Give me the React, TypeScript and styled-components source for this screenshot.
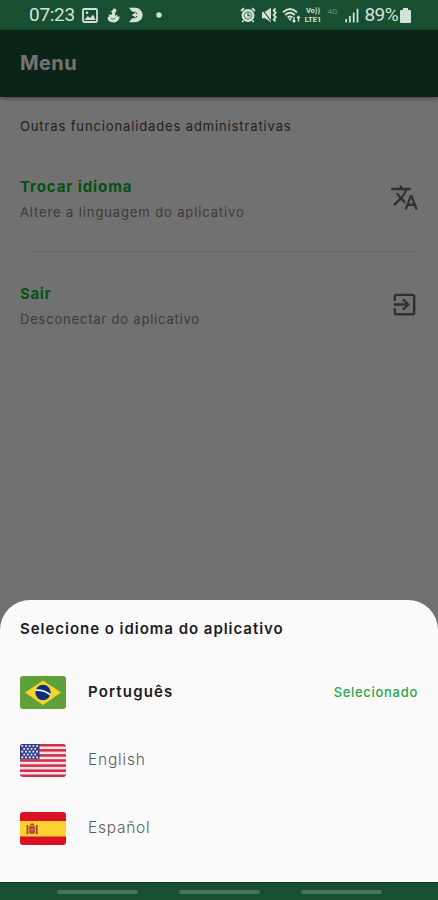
import React from 'react';
import styled, { createGlobalStyle } from 'styled-components';
import { MdTranslate, MdExitToApp } from 'react-icons/md';

const GlobalStyle = createGlobalStyle`
  * { box-sizing: border-box; }
  body { margin: 0; background: #174f30; }
`;

const Screen = styled.div`
  display: flex;
  flex-direction: column;
  width: 438px;
  height: 900px;
  overflow: hidden;
  font-family: Inter, 'Open Sans', sans-serif;
`;

const StatusBar = styled.div`
  display: flex;
  justify-content: space-between;
  align-items: center;
  flex: none;
  height: 30px;
  padding: 0 27px 0 29px;
  background: #174f30;
  color: #d3e2d8;
  font-family: Roboto, sans-serif;
  svg { display: block; flex: none; }
`;

const StatusGroup = styled.div`
  display: flex;
  align-items: center;
`;

const StatusText = styled.span<{ $spacing?: number }>`
  font-size: 19px;
  line-height: 30px;
  letter-spacing: ${(p) => p.$spacing ?? 0}px;
`;

const StatusIcon = styled.span<{ $gap: number }>`
  margin-left: ${(p) => p.$gap}px;
`;

const Lte = styled.span`
  display: flex;
  flex-direction: column;
  align-items: center;
  width: 19px;
  margin-left: 3px;
  font-size: 7.5px;
  font-weight: 700;
  line-height: 9px;
  letter-spacing: 0;
`;

const NetworkLabel = styled.span`
  align-self: flex-start;
  width: 12px;
  margin: 7px 0 0 5px;
  font-size: 8px;
  line-height: 9px;
  color: #6d9480;
`;

const Body = styled.div`
  position: relative;
  flex: 1;
  background: #fafafa;
`;

const Header = styled.header`
  display: flex;
  align-items: center;
  height: 67px;
  padding: 0 20px 1px;
  background: #1a5035;
  box-shadow: 0 1px 4px rgba(0, 0, 0, 0.45);
`;

const Label = styled.span<{
  $size: number;
  $color: string;
  $weight?: number;
  $spacing?: number;
}>`
  font-size: ${(p) => p.$size}px;
  font-weight: ${(p) => p.$weight ?? 400};
  color: ${(p) => p.$color};
  letter-spacing: ${(p) => p.$spacing ?? 0}px;
  line-height: 24px;
  white-space: nowrap;
`;

const Intro = styled.div`
  display: flex;
  padding: 17px 20px 0;
`;

const MenuItem = styled.div`
  display: flex;
  justify-content: space-between;
  align-items: center;
  height: 107px;
  padding: 0 19px 0 20px;
  color: #6b6b6b;
  svg { margin-bottom: 2px; }
`;

const MenuList = styled.div`
  padding-top: 7px;
`;

const ItemText = styled.div`
  display: flex;
  flex-direction: column;
  gap: 1px;
  padding-top: 1px;
`;

const Divider = styled.div`
  height: 1px;
  margin: -1px 18px 0 28px;
  background: #e2e2e2;
`;

const Scrim = styled.div`
  position: absolute;
  inset: 0;
  background: rgba(0, 0, 0, 0.55);
`;

const Sheet = styled.section`
  position: absolute;
  left: 0;
  right: 0;
  bottom: 0;
  height: 282px;
  padding: 17px 20px 0;
  border-radius: 30px 30px 0 0;
  background: #fafafa;
`;

const SheetTitle = styled.div`
  display: flex;
  height: 41px;
`;

const LanguageRow = styled.div`
  display: flex;
  align-items: center;
  height: 68px;
`;

const FlagBox = styled.div`
  width: 46px;
  height: 33px;
  margin-right: 22px;
  border-radius: 3px;
  overflow: hidden;
  svg { display: block; }
`;

const Selected = styled.div`
  display: flex;
  margin-left: auto;
`;

const NavBar = styled.nav`
  display: flex;
  justify-content: center;
  align-items: center;
  gap: 41px;
  flex: none;
  height: 18px;
  border-top: 1px solid #0b3a1d;
  background: #174f30;
`;

const NavHandle = styled.span`
  width: 81px;
  height: 4px;
  border-radius: 2px;
  background: #457359;
`;

const PictureIcon = () => (
  <svg width="16" height="15" viewBox="0 0 16 15">
    <rect x="1" y="1" width="14" height="13" rx="1.2" fill="none" stroke="currentColor" strokeWidth="1.8" />
    <path d="M2.5 12l3.3-4 2.4 2 2.8-3.6 2.7 5.6z" fill="currentColor" />
    <circle cx="5" cy="4.8" r="1.3" fill="currentColor" />
  </svg>
);

const DuckIcon = () => (
  <svg width="13" height="15" viewBox="0 0 13 15">
    <path
      d="M7.2.5c1.8 0 2.6 1.5 2.1 2.8L8 5.3l.3 2.4 2.3-1.1-.6 2 2.6-.2c-.1 3.5-2.5 6-6 6-3.2 0-6-1.6-6-4.1 0-1.2.8-2 1.900-2.100l-1-1.900 3.200.5.5-2.100L3.700 3.500l1.700-.8C5.600 1.300 6.200.5 7.200.5z"
      fill="currentColor"
    />
    <path d="M3.500 10.200c1.300 1.400 3.800 1.200 4.900-.5" fill="none" stroke="#174f30" strokeWidth="0.7" />
  </svg>
);

const CrescentIcon = () => (
  <svg width="16" height="16" viewBox="0 0 16 16">
    <path d="M1 .8h6.500a7.200 7.200 0 0 1 0 14.400H1l3.200-4h3a3.400 3.400 0 0 0 0-6.400h-3z" fill="currentColor" />
    <path d="M4.500 8h5M7 5.800v4.400" stroke="currentColor" strokeWidth="1.800" />
  </svg>
);

const AlarmIcon = () => (
  <svg width="16" height="16" viewBox="0 0 16 16">
    <circle cx="8" cy="8.500" r="6.500" fill="currentColor" />
    <path d="M1 4l3-2.800M15 4l-3-2.800M3.500 13.500L2.300 15M12.500 13.500l1.200 1.500" stroke="currentColor" strokeWidth="1.900" />
    <circle cx="8" cy="8.500" r="3.700" fill="none" stroke="#174f30" strokeWidth=".7" />
    <path d="M8 6v2.800h2.200" fill="none" stroke="#174f30" strokeWidth="1.100" />
  </svg>
);

const MuteIcon = () => (
  <svg width="16" height="16" viewBox="0 0 16 16">
    <path d="M1 4.800h3l6-4v14.400l-6-4H1z" fill="currentColor" />
    <path d="M.5 1.500l10 13" stroke="#174f30" strokeWidth="1.100" />
    <path d="M14.500 1.500l-1.800 2 2 2.200-2 2.300 2 2.200-2 2.200 1.800 2" fill="none" stroke="currentColor" strokeWidth="1.900" />
  </svg>
);

const WifiIcon = () => (
  <svg width="19" height="16" viewBox="0 0 19 16">
    <path d="M1 5.200q7-6.600 14 0M3.300 8q4.700-4.300 9.400 0M5.600 10.500q2.400-2 4.800 0" fill="none" stroke="currentColor" strokeWidth="1.900" />
    <path d="M6 11.500h4L8 14z" fill="currentColor" />
    <path d="M12 10v5M10.500 13.500L12 15l1.500-1.500M16.500 14.500v-5M15 11l1.500-1.500L18 11" fill="none" stroke="currentColor" strokeWidth="1.400" />
  </svg>
);

const SignalIcon = () => (
  <svg width="14" height="15" viewBox="0 0 14 15">
    <path d="M1.200 11v3.500M4.900 8v6.500M8.700 4.500v10M12.500.8v13.700" stroke="currentColor" strokeWidth="1.700" />
  </svg>
);

const BatteryIcon = () => (
  <svg width="11" height="15" viewBox="0 0 11 15">
    <path d="M3 0h5v2h2q1 0 1 1v11q0 1-1 1H1q-1 0-1-1V3q0-1 1-1h2z" fill="currentColor" />
  </svg>
);

const BrazilFlag = () => (
  <svg width="46" height="33" viewBox="0 0 46 33">
    <rect width="46" height="33" fill="#5fa03a" />
    <path d="M23 4.500L41 16.500 23 29 5 16.500z" fill="#f9d42a" />
    <circle cx="23" cy="16.500" r="7.700" fill="#0c2f7c" />
    <path d="M15.700 14.200q8-.6 14.700 4.600" fill="none" stroke="#eef2fa" strokeWidth="1.700" />
  </svg>
);

const UsaFlag = () => (
  <svg width="46" height="33" viewBox="0 0 46 33">
    <rect width="46" height="33" fill="#fae3e7" />
    {Array.from({ length: 7 }, (_, i) => (
      <rect key={i} y={i * 5.08} width="46" height="2.540" fill="#cf2f49" />
    ))}
    <rect width="19.500" height="15.300" fill="#343c83" />
    {Array.from({ length: 5 }, (_, r) =>
      Array.from({ length: r % 2 ? 4 : 5 }, (_, c) => (
        <circle key={`${r}-${c}`} cx={2.3 + c * 3.7 + (r % 2 ? 1.85 : 0)} cy={2 + r * 2.85} r="1.100" fill="#dfe1f0" />
      )),
    )}
  </svg>
);

const SpainFlag = () => (
  <svg width="46" height="33" viewBox="0 0 46 33">
    <rect width="46" height="33" fill="#db1226" />
    <rect y="9" width="46" height="15.500" fill="#fdd12f" />
    <path d="M7.500 13v8.500M16.700 13v8.500" stroke="#a9402a" strokeWidth="1.800" />
    <path d="M6.500 21.300h2.300M15.500 21.300h2.300" stroke="#8f4a35" strokeWidth="1" />
    <path d="M9.300 14.200h5.600v5.300q0 2.500-2.800 2.500t-2.800-2.500z" fill="#bd382a" />
    <path d="M9.800 13.500q2.300-4.500 4.600 0z" fill="#a5322a" />
    <path d="M12.100 15.500v5M10.300 17.700h3.600" stroke="#c98a70" strokeWidth=".8" />
  </svg>
);

export default function App() {
  return (
    <>
      <GlobalStyle />
      <Screen>
        <StatusBar>
          <StatusGroup>
            <StatusText $spacing={-0.3}>07:23</StatusText>
            <StatusIcon $gap={7}><PictureIcon /></StatusIcon>
            <StatusIcon $gap={9}><DuckIcon /></StatusIcon>
            <StatusIcon $gap={8}><CrescentIcon /></StatusIcon>
            <StatusIcon $gap={12}>
              <svg width="6" height="6" viewBox="0 0 6 6"><circle cx="3" cy="3" r="2.700" fill="currentColor" /></svg>
            </StatusIcon>
          </StatusGroup>
          <StatusGroup>
            <StatusIcon $gap={0}><AlarmIcon /></StatusIcon>
            <StatusIcon $gap={5}><MuteIcon /></StatusIcon>
            <StatusIcon $gap={5}><WifiIcon /></StatusIcon>
            <Lte><span>Vo))</span><span>LTE1</span></Lte>
            <NetworkLabel>4G</NetworkLabel>
            <StatusIcon $gap={5}><SignalIcon /></StatusIcon>
            <StatusIcon $gap={6}><StatusText $spacing={-0.6}>89%</StatusText></StatusIcon>
            <StatusIcon $gap={2}><BatteryIcon /></StatusIcon>
          </StatusGroup>
        </StatusBar>
        <Body>
          <Header>
            <Label $size={20} $weight={700} $color="#ffffff" $spacing={0.4}>Menu</Label>
          </Header>
          <Intro>
            <Label $size={13} $color="#4c4c4c" $spacing={0.87}>Outras funcionalidades administrativas</Label>
          </Intro>
          <MenuList>
            <MenuItem>
              <ItemText>
                <Label $size={15} $weight={700} $color="#08b52c" $spacing={0.9}>Trocar idioma</Label>
                <Label $size={13} $color="#858585" $spacing={0.88}>Altere a linguagem do aplicativo</Label>
              </ItemText>
              <MdTranslate size={29} />
            </MenuItem>
            <Divider />
            <MenuItem>
              <ItemText>
                <Label $size={15} $weight={700} $color="#08b52c" $spacing={0.6}>Sair</Label>
                <Label $size={13} $color="#858585" $spacing={0.8}>Desconectar do aplicativo</Label>
              </ItemText>
              <MdExitToApp size={29} />
            </MenuItem>
          </MenuList>
          <Scrim />
          <Sheet>
            <SheetTitle>
              <Label $size={15} $weight={600} $color="#1c1c1f" $spacing={0.97}>Selecione o idioma do aplicativo</Label>
            </SheetTitle>
            <LanguageRow>
              <FlagBox><BrazilFlag /></FlagBox>
              <Label $size={15} $weight={600} $color="#1c1c1f" $spacing={1.15}>Português</Label>
              <Selected>
                <Label $size={13} $weight={500} $color="#2aa84a" $spacing={0.7}>Selecionado</Label>
              </Selected>
            </LanguageRow>
            <LanguageRow>
              <FlagBox><UsaFlag /></FlagBox>
              <Label $size={15.5} $weight={300} $color="#5c5c5c" $spacing={0.8}>English</Label>
            </LanguageRow>
            <LanguageRow>
              <FlagBox><SpainFlag /></FlagBox>
              <Label $size={15.5} $weight={300} $color="#5c5c5c" $spacing={0.75}>Español</Label>
            </LanguageRow>
          </Sheet>
        </Body>
        <NavBar>
          <NavHandle />
          <NavHandle />
          <NavHandle />
        </NavBar>
      </Screen>
    </>
  );
}
